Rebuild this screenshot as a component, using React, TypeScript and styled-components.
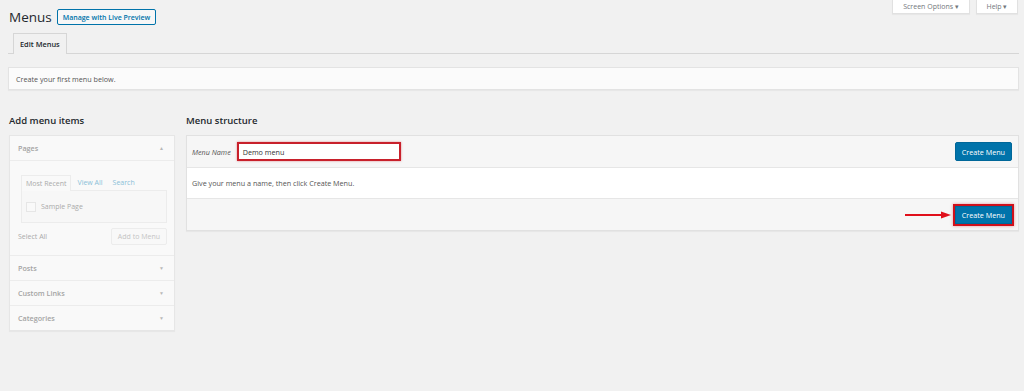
import styled, { createGlobalStyle } from 'styled-components';

const Global = createGlobalStyle`
  html, body {
    margin: 0;
    background: #f1f1f1;
    font-family: "Open Sans", "Noto Sans", sans-serif;
    color: #444;
  }
`;

const Page = styled.div`
  width: 1024px;
  height: 391px;
  padding: 0 5px 0 8px;
  box-sizing: border-box;
  overflow: hidden;
`;

const HeaderRow = styled.div`
  display: flex;
  justify-content: space-between;
  align-items: flex-start;
`;

const TitleWrap = styled.div`
  display: flex;
  align-items: center;
  gap: 5px;
  padding: 8px 0 0 1px;
`;

const Title = styled.h1`
  margin: 0;
  font-size: 13.5px;
  font-weight: 400;
  color: #23282d;
  line-height: 18px;
`;

const OutlineButton = styled.button`
  font-family: inherit;
  font-size: 7px;
  font-weight: 600;
  color: #0073aa;
  background: #f7f7f7;
  border: 1px solid #0073aa;
  border-radius: 2px;
  height: 16px;
  padding: 0 5px;
  cursor: pointer;
`;

const MetaLinks = styled.div`
  display: flex;
  gap: 6px;
  padding-right: 1px;
`;

const MetaLink = styled.button<{ $w: number }>`
  width: ${p => p.$w}px;
  height: 14px;
  background: #fff;
  border: 1px solid #e1e1e1;
  border-top: none;
  box-shadow: 0 1px 1px rgba(0,0,0,0.04);
  font-family: inherit;
  font-size: 7px;
  color: #72777c;
  padding: 0;
  cursor: pointer;
`;

const TabBar = styled.div`
  display: flex;
  margin-top: 7px;
  padding-left: 5px;
  border-bottom: 1px solid #d6d6d6;
`;

const Tab = styled.div`
  height: 19px;
  padding: 0 6px;
  display: flex;
  align-items: center;
  font-size: 7.4px;
  font-weight: 600;
  color: #23282d;
  background: #f1f1f1;
  border: 1px solid #d6d6d6;
  border-bottom: none;
  margin-bottom: -1px;
  padding-bottom: 1px;
`;

const Notice = styled.div`
  margin-top: 13px;
  height: 21px;
  display: flex;
  align-items: center;
  padding-left: 7px;
  background: #fbfbfb;
  border: 1px solid #e3e3e3;
  box-shadow: 0 1px 1px rgba(0,0,0,0.04);
  font-size: 7.2px;
  color: #555;
`;

const Columns = styled.div`
  display: flex;
  gap: 11px;
  margin-top: 24px;
  padding-left: 1px;
`;

const LeftCol = styled.div`
  width: 166px;
  flex-shrink: 0;
`;

const RightCol = styled.div`
  flex: 1;
`;

const SectionTitle = styled.h2`
  margin: 0 0 7px;
  height: 14px;
  font-size: 9.5px;
  font-weight: 600;
  color: #23282d;
  line-height: 14px;
`;

const Accordion = styled.div`
  background: #f9f9f9;
  border: 1px solid #e6e6e6;
  box-shadow: 0 1px 1px rgba(0,0,0,0.04);
`;

const AccHeader = styled.div<{ $open?: boolean }>`
  height: 24px;
  display: flex;
  align-items: center;
  justify-content: space-between;
  padding: 0 10px 0 8px;
  font-size: 7.2px;
  font-weight: 600;
  color: #a4a4a4;
  border-top: 1px solid #ececec;
  &:first-child { border-top: none; }
  ${p => p.$open && 'border-bottom: 1px solid #ececec;'}
`;

const Caret = styled.span`
  font-size: 5px;
  color: #b8b8b8;
`;

const AccBody = styled.div`
  padding: 14px 7px 10px 11px;
`;

const SubTabs = styled.div`
  display: flex;
  align-items: flex-end;
  gap: 2px;
  font-size: 7px;
`;

const SubTab = styled.span<{ $active?: boolean }>`
  height: 15px;
  display: flex;
  align-items: center;
  padding: 0 4px;
  color: ${p => (p.$active ? '#aaa' : '#8bbfd8')};
  ${p =>
    p.$active &&
    `border: 1px solid #ececec; border-bottom: none; background: #f9f9f9; margin-bottom: -1px; position: relative;`}
`;

const TabPanel = styled.div`
  height: 31px;
  display: flex;
  align-items: center;
  gap: 5px;
  padding-left: 4px;
  border: 1px solid #ececec;
  background: #f7f7f7;
  font-size: 7px;
  color: #aaa;
`;

const Check = styled.span`
  width: 8px;
  height: 8px;
  border: 1px solid #e6e6e6;
  background: #f9f9f9;
`;

const AccActions = styled.div`
  display: flex;
  justify-content: space-between;
  align-items: center;
  margin-top: 5px;
  margin-left: -3px;
  font-size: 7px;
  color: #aaa;
`;

const GhostButton = styled.span`
  height: 15px;
  padding: 0 6px;
  display: flex;
  align-items: center;
  border: 1px solid #ececec;
  border-radius: 2px;
  background: #f8f8f8;
  color: #c4c4c4;
  font-size: 7px;
`;

const MenuBox = styled.div`
  border: 1px solid #e1e1e1;
  box-shadow: 0 1px 1px rgba(0,0,0,0.04);
`;

const BoxHeader = styled.div`
  height: 31px;
  display: flex;
  align-items: center;
  justify-content: space-between;
  padding: 0 6px 0 5px;
  background: #f6f6f6;
  border-bottom: 1px solid #e6e6e6;
`;

const NameField = styled.label`
  display: flex;
  align-items: center;
  gap: 6px;
  font-size: 7.2px;
  font-style: italic;
  color: #555;
`;

const NameInput = styled.div`
  width: 156px;
  height: 15px;
  display: flex;
  align-items: center;
  padding-left: 4px;
  background: #fff;
  border: 2px solid #c8202b;
  box-shadow: 0 0 2px rgba(200, 32, 43, 0.5);
  font-style: normal;
  font-size: 7.2px;
  color: #333;
`;

const PrimaryButton = styled.button<{ $marked?: boolean }>`
  font-family: inherit;
  height: 19px;
  padding: 0 6px;
  background: #0073aa;
  border: 1px solid #006799;
  border-radius: 2px;
  color: #fff;
  font-size: 7.2px;
  cursor: pointer;
  ${p =>
    p.$marked &&
    'height: 18px; border-radius: 0; box-shadow: 0 0 0 2px #d0101b, 0 0 3px 2px rgba(208,16,27,0.4);'}
`;

const BoxBody = styled.div`
  height: 30px;
  display: flex;
  align-items: center;
  padding-left: 5px;
  background: #fff;
  border-bottom: 1px solid #e6e6e6;
  font-size: 7.2px;
  color: #555;
`;

const BoxFooter = styled.div`
  height: 31px;
  display: flex;
  align-items: center;
  justify-content: flex-end;
  gap: 4px;
  padding-right: 6px;
  background: #f6f6f6;
`;

const Arrow = () => (
  <svg width="46" height="8" viewBox="0 0 46 8">
    <line x1="0" y1="4" x2="38" y2="4" stroke="#e0101b" strokeWidth="2" />
    <polygon points="36,0.5 46,4 36,7.5" fill="#e0101b" />
  </svg>
);

export default function App() {
  return (
    <Page>
      <Global />
      <HeaderRow>
        <TitleWrap>
          <Title>Menus</Title>
          <OutlineButton>Manage with Live Preview</OutlineButton>
        </TitleWrap>
        <MetaLinks>
          <MetaLink $w={78}>Screen Options ▾</MetaLink>
          <MetaLink $w={42}>Help ▾</MetaLink>
        </MetaLinks>
      </HeaderRow>

      <TabBar>
        <Tab>Edit Menus</Tab>
      </TabBar>

      <Notice>Create your first menu below.</Notice>

      <Columns>
        <LeftCol>
          <SectionTitle>Add menu items</SectionTitle>
          <Accordion>
            <AccHeader $open>
              Pages <Caret>▲</Caret>
            </AccHeader>
            <AccBody>
              <SubTabs>
                <SubTab $active>Most Recent</SubTab>
                <SubTab>View All</SubTab>
                <SubTab>Search</SubTab>
              </SubTabs>
              <TabPanel>
                <Check />
                Sample Page
              </TabPanel>
              <AccActions>
                <span>Select All</span>
                <GhostButton>Add to Menu</GhostButton>
              </AccActions>
            </AccBody>
            <AccHeader>
              Posts <Caret>▼</Caret>
            </AccHeader>
            <AccHeader>
              Custom Links <Caret>▼</Caret>
            </AccHeader>
            <AccHeader>
              Categories <Caret>▼</Caret>
            </AccHeader>
          </Accordion>
        </LeftCol>

        <RightCol>
          <SectionTitle>Menu structure</SectionTitle>
          <MenuBox>
            <BoxHeader>
              <NameField>
                Menu Name
                <NameInput>Demo menu</NameInput>
              </NameField>
              <PrimaryButton>Create Menu</PrimaryButton>
            </BoxHeader>
            <BoxBody>Give your menu a name, then click Create Menu.</BoxBody>
            <BoxFooter>
              <Arrow />
              <PrimaryButton $marked>Create Menu</PrimaryButton>
            </BoxFooter>
          </MenuBox>
        </RightCol>
      </Columns>
    </Page>
  );
}
